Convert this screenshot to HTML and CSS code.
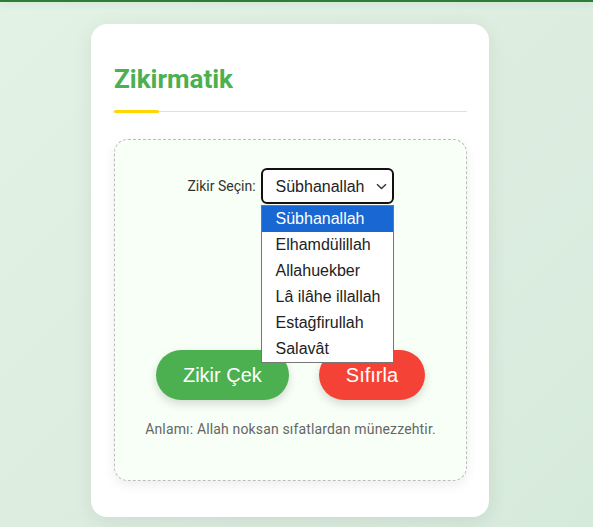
FILE: index.html
```html
<!DOCTYPE html>
<html lang="tr">
<head>
    <meta charset="UTF-8">
    <meta name="viewport" content="width=device-width, initial-scale=1.0">
    <title>Zikirmatik</title>
    <link rel="stylesheet" href="styles.css">
</head>
<body>
    <div class="topbar"></div>
    <div class="page">
        <div class="card">
            <h1>Zikirmatik</h1>
            <div class="panel">
                <div class="picker">
                    <label for="zikir">Zikir Seçin:</label>
                    <div class="select-wrap">
                        <select id="zikir">
                            <option selected>Sübhanallah</option>
                            <option>Elhamdülillah</option>
                            <option>Allahuekber</option>
                            <option>Lâ ilâhe illallah</option>
                            <option>Estağfirullah</option>
                            <option>Salavât</option>
                        </select>
                        <svg class="chevron" width="11" height="7" viewBox="0 0 11 7">
                            <path d="M1 1.2 L5.5 5.6 L10 1.2" fill="none" stroke="#333" stroke-width="1.4"/>
                        </svg>
                        <ul class="options">
                            <li class="active">Sübhanallah</li>
                            <li>Elhamdülillah</li>
                            <li>Allahuekber</li>
                            <li>Lâ ilâhe illallah</li>
                            <li>Estağfirullah</li>
                            <li>Salavât</li>
                        </ul>
                    </div>
                </div>
                <div class="spacer"></div>
                <div class="actions">
                    <button class="btn count">Zikir Çek</button>
                    <button class="btn reset">Sıfırla</button>
                </div>
                <p class="meaning">Anlamı: Allah noksan sıfatlardan münezzehtir.</p>
            </div>
        </div>
    </div>
</body>
</html>
```

FILE: styles.css
```css
body {
    margin: 0;
    padding: 0;
    font-family: Roboto, Arial, sans-serif;
    background: linear-gradient(135deg, #e2f2e4 0%, #dcede0 60%, #d6eadb 100%);
    min-height: 527px;
    overflow: hidden;
}

.topbar {
    height: 2px;
    background-color: #2e7d32;
    box-shadow: 0 2px 6px rgba(0, 0, 0, 0.12);
}

.page {
    padding: 22px 104px 10px 91px;
}

.card {
    background-color: #ffffff;
    border-radius: 16px;
    padding: 40px 22px 36px 23px;
    box-shadow: 0 4px 20px rgba(0, 0, 0, 0.08);
}

h1 {
    position: relative;
    margin: 0 0 27px;
    padding-bottom: 17px;
    border-bottom: 1px solid #e0e0e0;
    font-size: 26px;
    font-weight: 700;
    line-height: 30px;
    color: #4caf50;
}

h1::after {
    content: "";
    position: absolute;
    left: 0;
    bottom: -2px;
    width: 45px;
    height: 3px;
    border-radius: 2px;
    background-color: #ffd600;
}

.panel {
    border: 1px dashed #bdbdbd;
    border-radius: 14px;
    background-color: #f8fff7;
    padding: 28px 20px 41px;
    box-shadow: 0 4px 12px rgba(0, 0, 0, 0.07);
}

.picker {
    display: flex;
    justify-content: center;
    align-items: center;
    gap: 5px;
}

.picker label {
    font-size: 14px;
    color: #333;
}

.select-wrap {
    position: relative;
}

select {
    display: block;
    width: 133px;
    height: 36px;
    padding: 0 24px 0 13px;
    border: 2px solid #111;
    border-radius: 6px;
    background-color: #ffffff;
    font-family: "Liberation Sans", Arial, sans-serif;
    font-size: 16px;
    color: #222;
    appearance: none;
    -webkit-appearance: none;
}

.chevron {
    position: absolute;
    top: 15px;
    right: 7px;
    pointer-events: none;
}

.options {
    position: absolute;
    top: 37px;
    left: 0;
    right: 0;
    margin: 0;
    padding: 0;
    list-style: none;
    background-color: #ffffff;
    border: 1px solid #767676;
    z-index: 2;
}

.options li {
    height: 26px;
    line-height: 26px;
    padding-left: 14px;
    font-family: "Liberation Sans", Arial, sans-serif;
    font-size: 16px;
    color: #222;
    white-space: nowrap;
}

.options li.active {
    background-color: #1967d2;
    color: #ffffff;
}

.spacer {
    height: 146px;
}

.actions {
    display: flex;
    justify-content: center;
    gap: 30px;
}

.btn {
    height: 50px;
    padding: 0 27px;
    border: none;
    border-radius: 25px;
    font-family: "Liberation Sans", Arial, sans-serif;
    font-size: 20px;
    color: #ffffff;
    cursor: pointer;
    box-shadow: 0 4px 10px rgba(0, 0, 0, 0.15);
}

.btn.count {
    background-color: #4caf50;
}

.btn.reset {
    background-color: #f44336;
}

.meaning {
    margin: 19px 0 0;
    text-align: center;
    font-size: 14px;
    letter-spacing: 0.15px;
    line-height: 20px;
    color: #666;
}
```
